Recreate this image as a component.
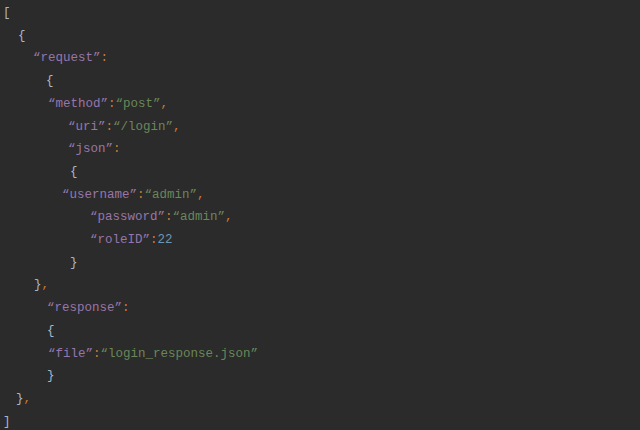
import React from "react";

type Tok = { t: string; c: "k" | "s" | "p" | "n" | "b" };

const color: Record<Tok["c"], string> = {
  k: "text-[#9876aa]",
  s: "text-[#6a8759]",
  p: "text-[#cc7832]",
  n: "text-[#6897bb]",
  b: "text-[#a9b7c6]",
};

const key = (s: string): Tok[] => [{ t: "\u201c" + s + "\u201d", c: "k" }];
const str = (s: string): Tok[] => [{ t: "\u201c" + s + "\u201d", c: "s" }];
const P = (s: string): Tok => ({ t: s, c: "p" });
const B = (s: string): Tok => ({ t: s, c: "b" });

const lines: { pad: string; toks: Tok[] }[] = [
  { pad: "pl-[3px]", toks: [B("[")] },
  { pad: "pl-[18px]", toks: [B("{")] },
  { pad: "pl-[33px]", toks: [...key("request"), P(":")] },
  { pad: "pl-[46px]", toks: [B("{")] },
  { pad: "pl-[48px]", toks: [...key("method"), P(":"), ...str("post"), P(",")] },
  { pad: "pl-[68px]", toks: [...key("uri"), P(":"), ...str("/login"), P(",")] },
  { pad: "pl-[68px]", toks: [...key("json"), P(":")] },
  { pad: "pl-[70px]", toks: [B("{")] },
  { pad: "pl-[62px]", toks: [...key("username"), P(":"), ...str("admin"), P(",")] },
  { pad: "pl-[90px]", toks: [...key("password"), P(":"), ...str("admin"), P(",")] },
  { pad: "pl-[90px]", toks: [...key("roleID"), P(":"), { t: "22", c: "n" }] },
  { pad: "pl-[70px]", toks: [B("}")] },
  { pad: "pl-[34px]", toks: [B("}"), P(",")] },
  { pad: "pl-[47px]", toks: [...key("response"), P(":")] },
  { pad: "pl-[47px]", toks: [B("{")] },
  { pad: "pl-[48px]", toks: [...key("file"), P(":"), ...str("login_response.json")] },
  { pad: "pl-[47px]", toks: [B("}")] },
  { pad: "pl-[16px]", toks: [B("}"), P(",")] },
  { pad: "pl-[3px]", toks: [B("]")] },
];

export default function App() {
  return (
    <div className="w-[640px] h-[430px] bg-[#2b2b2b] overflow-hidden font-['Liberation_Mono',monospace] text-[12.5px] leading-[22.7px] pt-[2px] whitespace-pre">
      {lines.map((l, i) => (
        <div key={i} className={l.pad}>
          {l.toks.map((t, j) => (
            <span key={j} className={color[t.c]}>
              {t.t}
            </span>
          ))}
        </div>
      ))}
    </div>
  );
}
